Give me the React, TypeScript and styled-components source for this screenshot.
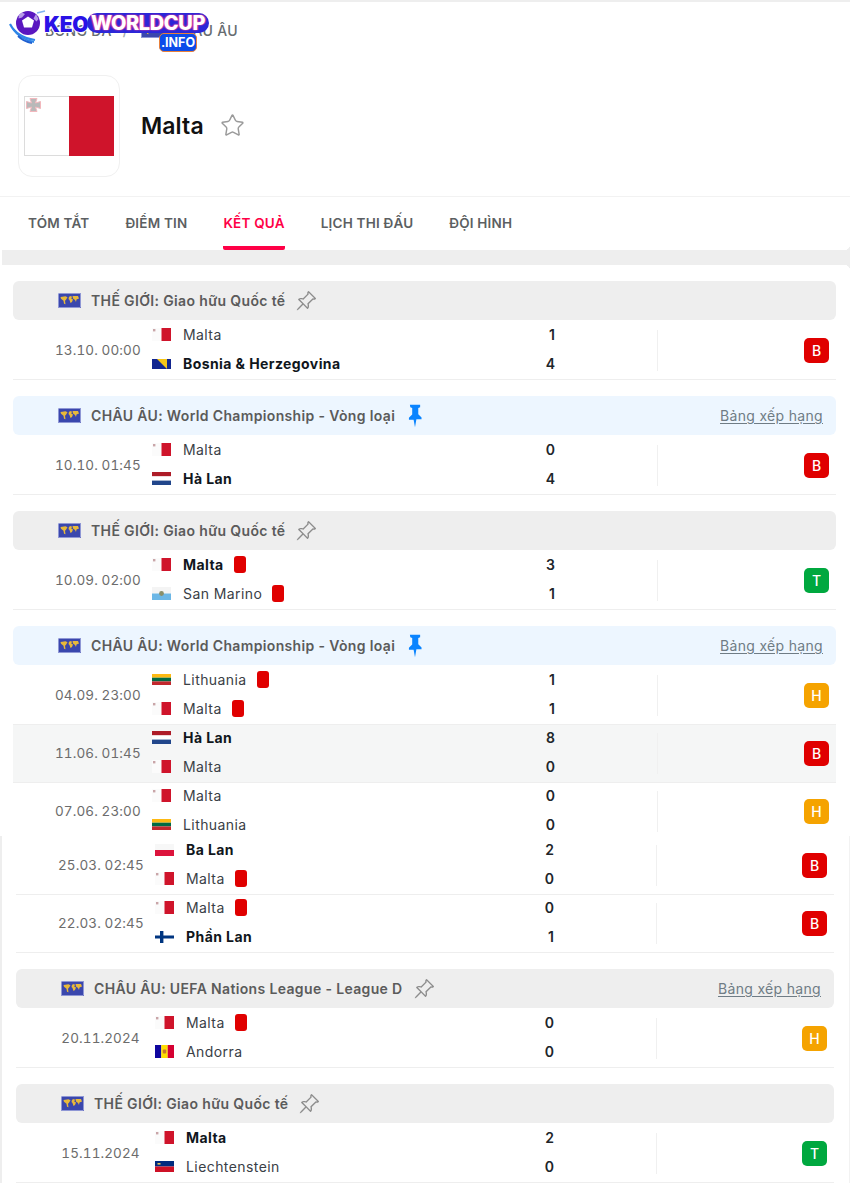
import React from 'react';
import styled, { createGlobalStyle } from 'styled-components';
import { Star } from 'lucide-react';
import { BsPinAngle } from 'react-icons/bs';

const GlobalStyle = createGlobalStyle`
  html, body { margin: 0; padding: 0; background: #fff; }
  body { font-family: Inter, "Noto Sans", sans-serif; overflow: hidden; }
  * { box-sizing: border-box; }
`;

const Page = styled.div`
  position: relative;
  width: 850px;
  height: 1183px;
  overflow: hidden;
  background: #fff;
`;

const TopStrip = styled.div`
  height: 2px;
  background: #eee;
`;

const Breadcrumb = styled.div`
  display: flex;
  align-items: center;
  height: 56px;
  padding-left: 45px;
  color: #666c70;
  font-size: 14px;
  font-weight: 500;
  letter-spacing: 0.3px;
`;

const Crumb = styled.span`
  white-space: nowrap;
`;

const CrumbSlash = styled.span`
  margin: 0 13px 0 11px;
  color: #a5a8ab;
`;

const CrumbFlag = styled.span`
  display: inline-flex;
  margin-right: 7px;
`;

const TeamHeader = styled.div`
  display: flex;
  align-items: center;
  height: 139px;
  padding: 17px 0 20px 18px;
  border-bottom: 1px solid #f2f2f2;
`;

const LogoBox = styled.div`
  display: flex;
  align-items: center;
  justify-content: center;
  width: 102px;
  height: 102px;
  border: 1px solid #f0f0f0;
  border-radius: 14px;
`;

const TeamName = styled.h1`
  margin: 0 0 0 21px;
  color: #111;
  font-size: 23px;
  font-weight: 600;
  letter-spacing: 0.1px;
`;

const FavStar = styled(Star)`
  margin-left: 16px;
  color: #9a9a9a;
`;

const Tabs = styled.nav`
  display: flex;
  gap: 36px;
  height: 53px;
  padding-left: 28px;
`;

const Tab = styled.a<{ $active?: boolean }>`
  display: flex;
  align-items: center;
  height: 53px;
  padding-top: 3px;
  border-bottom: 4px solid ${p => (p.$active ? '#ff0046' : 'transparent')};
  border-radius: 0 0 2px 2px;
  color: ${p => (p.$active ? '#ff0046' : '#5c5f62')};
  font-size: 13.5px;
  font-weight: 600;
  letter-spacing: 0.2px;
  white-space: nowrap;
`;

const Band = styled.div`
  position: relative;
  height: 15px;
  margin-left: 2px;
  background: #eee;

  &::before,
  &::after {
    content: '';
    position: absolute;
    right: 0;
    width: 6px;
    height: 6px;
  }

  &::before {
    top: -6px;
    background: radial-gradient(circle at 0 0, transparent 6px, #eee 6.5px);
  }

  &::after {
    bottom: -6px;
    background: radial-gradient(circle at 0 100%, transparent 6px, #eee 6.5px);
  }
`;

const TopPanel = styled.div`
  height: 571px;
  overflow: hidden;
  padding: 16px 14px 0 13px;
`;

const BottomPanel = styled.div`
  height: 347px;
  padding: 1px 15px 0 14px;
  border-left: 2px solid #eee;
  border-right: 1px solid #f2f2f2;
  overflow: hidden;
`;

const Section = styled.section`
  margin-bottom: 16px;
`;

const LeagueBar = styled.div<{ $pinned?: boolean }>`
  display: flex;
  align-items: center;
  height: 39px;
  margin-bottom: 2px;
  padding: 0 13px 0 45px;
  border-radius: 6px;
  background: ${p => (p.$pinned ? '#edf6ff' : '#eeeeee')};
`;

const LeagueName = styled.span`
  margin-left: 10px;
  color: #5b5b5b;
  font-size: 14px;
  font-weight: 600;
  letter-spacing: 0.35px;
  white-space: nowrap;
`;

const GreyPin = styled(BsPinAngle)`
  margin-left: 10px;
  color: #8d8d8d;
`;

const BluePin = styled.svg`
  margin-left: 13px;
`;

const TableLink = styled.a`
  margin-left: auto;
  color: #6f7c85;
  font-size: 14px;
  letter-spacing: 0.32px;
  text-decoration: underline;
  text-underline-offset: 2px;
`;

const MatchRow = styled.div<{ $hover?: boolean }>`
  display: flex;
  align-items: center;
  height: 58px;
  padding-right: 7px;
  border-bottom: 1px solid #eeeeee;
  background: ${p => (p.$hover ? '#f5f6f6' : '#fff')};
`;

const MatchTime = styled.div`
  flex: 0 0 127px;
  min-width: 0;
  margin-top: -1px;
  padding-left: 42px;
  color: #6c6c6c;
  font-size: 13.5px;
  font-variant-numeric: tabular-nums;
  letter-spacing: 0.1px;
  text-align: center;
  white-space: nowrap;
`;

const Teams = styled.div<{ $narrow?: boolean }>`
  display: grid;
  flex: 0 0 ${p => (p.$narrow ? 401 : 405)}px;
  grid-auto-rows: 29px;
  margin: -3px 100px 0 12px;
`;

const TeamLine = styled.div`
  display: flex;
  align-items: center;
`;

const FlagSlot = styled.span`
  display: flex;
  align-items: center;
  width: 19px;
  height: 14px;
  margin-right: 12px;
`;

const Name = styled.span<{ $winner?: boolean }>`
  color: ${p => (p.$winner ? '#10161c' : '#3a4046')};
  font-size: 14px;
  font-weight: ${p => (p.$winner ? 700 : 400)};
  letter-spacing: 0.42px;
  white-space: nowrap;
`;

const RedCard = styled.span`
  width: 12px;
  height: 17px;
  margin-left: 10px;
  border-radius: 3px;
  background: #e00000;
`;

const Score = styled.span`
  margin-left: auto;
  margin-right: 2px;
  color: #20252a;
  font-size: 14px;
  font-weight: 600;
`;

const Divider = styled.div`
  flex: 0 0 1px;
  height: 41px;
  background: #f0f0f0;
`;

const Badge = styled.span<{ $result: 'B' | 'H' | 'T' }>`
  display: flex;
  align-items: center;
  justify-content: center;
  width: 25px;
  height: 25px;
  margin-left: auto;
  border-radius: 5px;
  background: ${p => ({ B: '#e00000', H: '#f5a300', T: '#00a83f' }[p.$result])};
  color: #fff;
  font-size: 14px;
  font-weight: 500;
`;

const SiteLogo = styled.div`
  position: absolute;
  top: 9px;
  left: 9px;
  width: 205px;
  height: 46px;
`;

const LogoBall = styled.svg`
  position: absolute;
  top: 0;
  left: 0;
`;

const LogoKeo = styled.span`
  position: absolute;
  top: 3px;
  left: 35px;
  color: #2a12e6;
  font-size: 21px;
  font-weight: 900;
  letter-spacing: -0.3px;
  line-height: 25px;
  text-shadow: -1px 0 #fff, 1px 0 #fff, 0 -1px #fff, 0 1px #fff;
`;

const LogoPill = styled.span`
  position: absolute;
  top: 4px;
  left: 78px;
  width: 122px;
  height: 20px;
  border-radius: 10px;
  background: #2b27d8;
  color: #fff;
  font-size: 20px;
  font-weight: 800;
  letter-spacing: -0.4px;
  line-height: 20px;
  text-align: center;
  text-shadow: 0 0 2px #e040a0, 1px 0 1px #d43aa0, -1px 0 1px #d43aa0;
  white-space: nowrap;
`;

const LogoInfo = styled.span`
  position: absolute;
  top: 24px;
  left: 150px;
  width: 38px;
  height: 19px;
  border: 1px solid #e8803a;
  border-radius: 5px;
  background: #0c4bea;
  color: #fff;
  font-size: 12.5px;
  font-weight: 700;
  line-height: 17px;
  text-align: center;
`;

const FlagSvg = styled.svg`
  display: block;
`;

const WorldFlag = () => (
  <FlagSvg width="23" height="15" viewBox="0 0 23 15">
    <rect width="23" height="15" fill="#3a47ad" />
    <rect x="0.5" y="0.5" width="22" height="14" fill="none" stroke="#c9cdf0" strokeWidth="0.6" />
    <path d="M2.500 4l5-.8 2 1-1.500 2.500-1 1 .5 3.500-1.500-.5-.5-3-2.500-2zM11 3.800l2-.8 1 1-.8 1.500 1.800 1-1 2.500-1.500 1-1-3-1-1zM14.500 3l5.500 0 1 2.500-2.500 1-.5 2.500-1-2-2-1.500z" fill="#e8b93a" />
  </FlagSvg>
);

const Malta = () => (
  <FlagSvg width="19" height="13" viewBox="0 0 19 13">
    <rect width="9.5" height="13" fill="#fbfbfb" />
    <rect x="9.5" width="9.500" height="13" fill="#cf142b" />
    <rect x="1" y="1" width="2.400" height="2.400" fill="#c9a5a8" />
  </FlagSvg>
);

const Bosnia = () => (
  <FlagSvg width="19" height="10" viewBox="0 0 19 10">
    <rect width="19" height="10" fill="#12268f" />
    <path d="M5 0h10v10z" fill="#f5c518" />
  </FlagSvg>
);

const Netherlands = () => (
  <FlagSvg width="19" height="13" viewBox="0 0 19 13">
    <rect width="19" height="4.400" fill="#ae1c28" />
    <rect y="4.400" width="19" height="4.200" fill="#fff" />
    <rect y="8.600" width="19" height="4.400" fill="#21468b" />
  </FlagSvg>
);

const SanMarino = () => (
  <FlagSvg width="19" height="13" viewBox="0 0 19 13">
    <rect width="19" height="6.500" fill="#f4f4f4" />
    <rect y="6.500" width="19" height="6.500" fill="#6cb7e6" />
    <circle cx="9.500" cy="6.500" r="2.400" fill="#8a8f6a" />
  </FlagSvg>
);

const Lithuania = () => (
  <FlagSvg width="19" height="11" viewBox="0 0 19 11">
    <rect width="19" height="3.700" fill="#fdb913" />
    <rect y="3.700" width="19" height="3.700" fill="#006a44" />
    <rect y="7.400" width="19" height="3.600" fill="#c1272d" />
  </FlagSvg>
);

const Poland = () => (
  <FlagSvg width="19" height="12" viewBox="0 0 19 12">
    <rect width="19" height="6" fill="#f7f7f7" />
    <rect y="6" width="19" height="6" fill="#dc143c" />
  </FlagSvg>
);

const Finland = () => (
  <FlagSvg width="19" height="12" viewBox="0 0 19 12">
    <rect width="19" height="12" fill="#fff" />
    <rect x="5" width="3.400" height="12" fill="#003580" />
    <rect y="4.500" width="19" height="3" fill="#003580" />
  </FlagSvg>
);

const Andorra = () => (
  <FlagSvg width="19" height="13" viewBox="0 0 19 13">
    <rect width="6.300" height="13" fill="#10069f" />
    <rect x="6.300" width="6.400" height="13" fill="#fedd00" />
    <rect x="12.700" width="6.300" height="13" fill="#d50032" />
    <rect x="7.800" y="4.500" width="3.400" height="4" rx="1" fill="#c7772a" />
  </FlagSvg>
);

const Liechtenstein = () => (
  <FlagSvg width="19" height="11" viewBox="0 0 19 11">
    <rect width="19" height="5.500" fill="#002b7f" />
    <rect y="5.500" width="19" height="5.500" fill="#ce1126" />
    <rect x="2.500" y="2" width="3" height="1.600" fill="#e3c35a" />
  </FlagSvg>
);

const flags = {
  Malta, Bosnia, Netherlands, SanMarino, Lithuania, Poland, Finland, Andorra, Liechtenstein,
};
type FlagKey = keyof typeof flags;

type Side = { flag: FlagKey; name: string; score: number; winner?: boolean; card?: boolean };
type Match = { time: string; home: Side; away: Side; result: 'B' | 'H' | 'T'; hover?: boolean };
type Group = { league?: string; pinned?: boolean; table?: boolean; matches: Match[] };

const friendly = 'THẾ GIỚI: Giao hữu Quốc tế';
const qualifiers = 'CHÂU ÂU: World Championship - Vòng loại';

const topGroups: Group[] = [
  {
    league: friendly,
    matches: [{
      time: '13.10. 00:00',
      home: { flag: 'Malta', name: 'Malta', score: 1 },
      away: { flag: 'Bosnia', name: 'Bosnia & Herzegovina', score: 4, winner: true },
      result: 'B',
    }],
  },
  {
    league: qualifiers,
    pinned: true,
    table: true,
    matches: [{
      time: '10.10. 01:45',
      home: { flag: 'Malta', name: 'Malta', score: 0 },
      away: { flag: 'Netherlands', name: 'Hà Lan', score: 4, winner: true },
      result: 'B',
    }],
  },
  {
    league: friendly,
    matches: [{
      time: '10.09. 02:00',
      home: { flag: 'Malta', name: 'Malta', score: 3, winner: true, card: true },
      away: { flag: 'SanMarino', name: 'San Marino', score: 1, card: true },
      result: 'T',
    }],
  },
  {
    league: qualifiers,
    pinned: true,
    table: true,
    matches: [
      {
        time: '04.09. 23:00',
        home: { flag: 'Lithuania', name: 'Lithuania', score: 1, card: true },
        away: { flag: 'Malta', name: 'Malta', score: 1, card: true },
        result: 'H',
      },
      {
        time: '11.06. 01:45',
        home: { flag: 'Netherlands', name: 'Hà Lan', score: 8, winner: true },
        away: { flag: 'Malta', name: 'Malta', score: 0 },
        result: 'B',
        hover: true,
      },
      {
        time: '07.06. 23:00',
        home: { flag: 'Malta', name: 'Malta', score: 0 },
        away: { flag: 'Lithuania', name: 'Lithuania', score: 0 },
        result: 'H',
      },
    ],
  },
];

const bottomGroups: Group[] = [
  {
    matches: [
      {
        time: '25.03. 02:45',
        home: { flag: 'Poland', name: 'Ba Lan', score: 2, winner: true },
        away: { flag: 'Malta', name: 'Malta', score: 0, card: true },
        result: 'B',
      },
      {
        time: '22.03. 02:45',
        home: { flag: 'Malta', name: 'Malta', score: 0, card: true },
        away: { flag: 'Finland', name: 'Phần Lan', score: 1, winner: true },
        result: 'B',
      },
    ],
  },
  {
    league: 'CHÂU ÂU: UEFA Nations League - League D',
    table: true,
    matches: [{
      time: '20.11.2024',
      home: { flag: 'Malta', name: 'Malta', score: 0, card: true },
      away: { flag: 'Andorra', name: 'Andorra', score: 0 },
      result: 'H',
    }],
  },
  {
    league: friendly,
    matches: [{
      time: '15.11.2024',
      home: { flag: 'Malta', name: 'Malta', score: 2, winner: true },
      away: { flag: 'Liechtenstein', name: 'Liechtenstein', score: 0 },
      result: 'T',
    }],
  },
];

const TeamRow = ({ side }: { side: Side }) => {
  const Flag = flags[side.flag];
  return (
    <TeamLine>
      <FlagSlot><Flag /></FlagSlot>
      <Name $winner={side.winner}>{side.name}</Name>
      {side.card && <RedCard />}
      <Score>{side.score}</Score>
    </TeamLine>
  );
};

const MatchGroup = ({ group, narrow }: { group: Group; narrow?: boolean }) => (
  <Section>
    {group.league && (
      <LeagueBar $pinned={group.pinned}>
        <WorldFlag />
        <LeagueName>{group.league}</LeagueName>
        {group.pinned ? (
          <BluePin width="14" height="24" viewBox="0 0 15 24">
            <path d="M2 0h11v2.500l-2 1v6.500l3.500 3.500v2H9L7.500 24 6 16H1v-2l3.500-3.500V3.500l-2-1z" fill="#0a84ff" />
          </BluePin>
        ) : (
          <GreyPin size={22} />
        )}
        {group.table && <TableLink>Bảng xếp hạng</TableLink>}
      </LeagueBar>
    )}
    {group.matches.map(m => (
      <MatchRow key={m.time} $hover={m.hover}>
        <MatchTime>{m.time}</MatchTime>
        <Teams $narrow={narrow}>
          <TeamRow side={m.home} />
          <TeamRow side={m.away} />
        </Teams>
        <Divider />
        <Badge $result={m.result}>{m.result}</Badge>
      </MatchRow>
    ))}
  </Section>
);

const App = () => (
  <Page>
    <GlobalStyle />
    <TopStrip />
    <Breadcrumb>
      <Crumb>BÓNG ĐÁ</Crumb>
      <CrumbSlash>/</CrumbSlash>
      <CrumbFlag><WorldFlag /></CrumbFlag>
      <Crumb>CHÂU ÂU</Crumb>
    </Breadcrumb>
    <TeamHeader>
      <LogoBox>
        <svg width="90" height="60" viewBox="0 0 90 60">
          <rect x="0.5" y="0.5" width="45" height="59" fill="#fff" stroke="#dcdcdc" />
          <rect x="45" width="45" height="60" fill="#cf142b" />
          <path d="M6 2.500h7l-1.500 4.500 5-1.500v7l-5-1.500 1.500 4.500H6l1.500-4.500-5 1.500v-7l5 1.500z" fill="#b9b9b9" stroke="#f2b8bd" />
        </svg>
      </LogoBox>
      <TeamName>Malta</TeamName>
      <FavStar size={25} strokeWidth={1.4} />
    </TeamHeader>
    <Tabs>
      <Tab>TÓM TẮT</Tab>
      <Tab>ĐIỂM TIN</Tab>
      <Tab $active>KẾT QUẢ</Tab>
      <Tab>LỊCH THI ĐẤU</Tab>
      <Tab>ĐỘI HÌNH</Tab>
    </Tabs>
    <Band />
    <TopPanel>
      {topGroups.map(g => <MatchGroup key={g.matches[0].time} group={g} />)}
    </TopPanel>
    <BottomPanel>
      {bottomGroups.map(g => <MatchGroup key={g.matches[0].time} group={g} narrow />)}
    </BottomPanel>
    <SiteLogo>
      <LogoBall width="37" height="38" viewBox="0 0 37 38">
        <path d="M1 15c4 8 12 14 25 16" stroke="#2f86e8" strokeWidth="2.200" fill="none" />
        <path d="M4 20c4 6 11 11 21 13" stroke="#2f86e8" strokeWidth="1.800" fill="none" />
        <path d="M9 27c3 3 8 6 14 7" stroke="#1f5fd0" strokeWidth="1.800" fill="none" />
        <path d="M28 4l8-2" stroke="#7fb4f0" strokeWidth="1.500" fill="none" />
        <circle cx="19" cy="14" r="12" fill="#5a17c0" />
        <path d="M19 7.500l6 4-2 7h-8l-2-7z" fill="#fff" />
        <path d="M13 3.500l3 1.500-3 3.500-3.500 1 .5-4zM27 5l2.500 5-2 2.500-3-3z" fill="#b79be8" />
      </LogoBall>
      <LogoKeo>KEO</LogoKeo>
      <LogoPill>WORLDCUP</LogoPill>
      <LogoInfo>.INFO</LogoInfo>
    </SiteLogo>
  </Page>
);

export default App;
